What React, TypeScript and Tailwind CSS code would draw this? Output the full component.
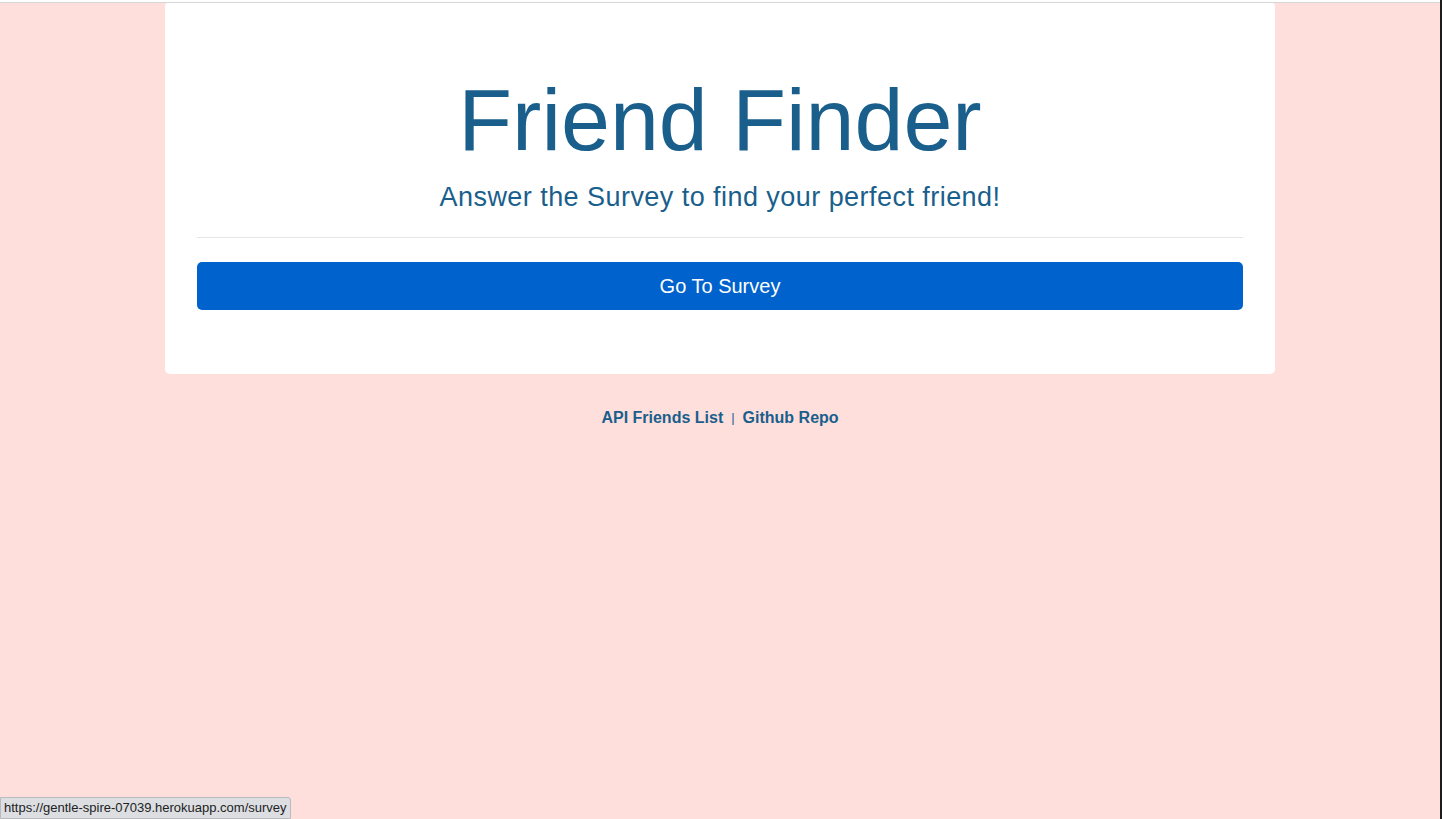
import React from "react";

export default function App() {
  return (
    <div
      className="relative flex h-[819px] w-full overflow-hidden"
      style={{ fontFamily: '"Liberation Sans", Arial, Helvetica, sans-serif' }}
    >
      <div className="flex min-w-0 flex-1 flex-col">
        <div className="h-[2px] bg-white" />
        <div className="h-px bg-[#d6d6d6]" />
        <div className="flex flex-1 flex-col items-center bg-[#ffdfdc]">
          <div className="flex w-[1110px] flex-col rounded-b-[5px] rounded-t-[3px] bg-white px-8 pb-16 pt-16">
            <h1 className="text-center text-[88px] font-normal leading-[1.2] text-[#1a5f8c]">
              Friend Finder
            </h1>
            <h4 className="mt-[10px] text-center text-[27px] font-normal leading-[28px] tracking-[0.45px] text-[#1a5f8c]">
              Answer the Survey to find your perfect friend!
            </h4>
            <hr className="mb-6 mt-[26px] border-0 border-t border-[#e5e5e5]" />
            <button className="h-12 w-full rounded-[5px] bg-[#0062cc] text-[20px] leading-[1.5] text-white">
              Go To Survey
            </button>
          </div>
          <div className="mt-[32px] flex items-center gap-[8px] text-[16px] font-bold text-[#1a5f8c]">
            <a className="cursor-pointer">API Friends List</a>
            <span className="text-[13px] font-normal">|</span>
            <a className="cursor-pointer">Github Repo</a>
          </div>
        </div>
      </div>
      <div className="w-[2px] bg-[#1c1c1c]" />
      <div className="absolute bottom-0 left-0 rounded-tr-[3px] border border-[#b9babd] bg-[#dcdee2] px-[3px] py-[2px] text-[13px] leading-[16px] text-[#222]">
        https://gentle-spire-07039.herokuapp.com/survey
      </div>
    </div>
  );
}
